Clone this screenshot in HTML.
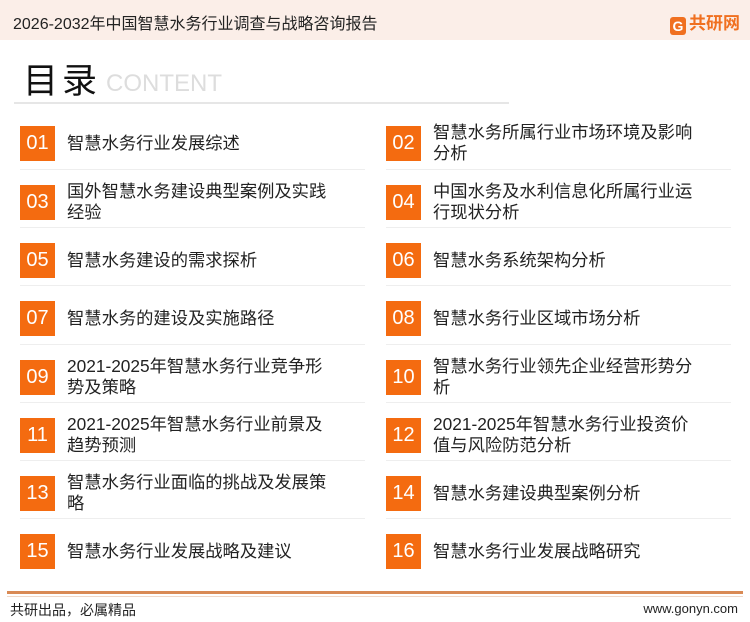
<!DOCTYPE html>
<html><head><meta charset="utf-8"><style>
body{margin:0;width:750px;height:622px;background:#fff;position:relative;overflow:hidden;font-family:"Liberation Sans","Noto Sans CJK SC",sans-serif;}
.hd{position:absolute;left:0;top:0;width:750px;height:40px;background:#fbeee8;}
.hd .t{position:absolute;left:13px;top:10px;font-size:16px;color:#222;}
.logo{position:absolute;right:10px;top:9px;font-size:17px;font-weight:bold;color:#f07020;}
.logo b{display:inline-block;width:16px;height:18px;background:#f07020;color:#fff;font-size:14px;text-align:center;line-height:18px;border-radius:3px;margin-right:3px;vertical-align:-2px}
.ml{position:absolute;left:23px;top:61px;font-size:35px;line-height:42px;color:#111;letter-spacing:4px;}
.ct{position:absolute;left:106px;top:70px;font-size:24px;color:#ddd;line-height:28px;}
.ln{position:absolute;left:14px;top:102px;width:495px;height:2px;background:#e6e6e6;}
.it{position:absolute;width:330px;height:58px;}
.it .n{position:absolute;left:0;width:35px;height:35px;background:#f46b10;color:#fff;font-size:20px;text-align:center;line-height:35px;}
.it .x{position:absolute;left:47px;font-size:17.3px;color:#222;line-height:21px;width:268px;}
.sep{position:absolute;height:1px;background:#eee;width:242px;}
.fl{position:absolute;left:7px;top:591px;width:736px;height:3px;background:#d98a55;}
.fl2{position:absolute;left:7px;top:596px;width:736px;height:1px;background:#f0d8c8;}
.ft{position:absolute;left:10px;top:600px;font-size:14px;color:#222;}
.fr{position:absolute;right:12px;top:601px;font-size:13px;color:#222;}
</style></head><body>
<div class="hd"><div class="t">2026-2032年中国智慧水务行业调查与战略咨询报告</div><div class="logo"><b>G</b>共研网</div></div>
<div class="ml">目录</div><div class="ct">CONTENT</div>
<div class="ln"></div>

<div class="it" style="left:20px;top:126px"><div class="n">01</div><div class="x" style="top:7px">智慧水务行业发展综述</div></div>
<div class="it" style="left:386px;top:126px"><div class="n">02</div><div class="x" style="top:-4px">智慧水务所属行业市场环境及影响分析</div></div>
<div class="it" style="left:20px;top:185px"><div class="n">03</div><div class="x" style="top:-4px">国外智慧水务建设典型案例及实践经验</div></div>
<div class="it" style="left:386px;top:185px"><div class="n">04</div><div class="x" style="top:-4px">中国水务及水利信息化所属行业运行现状分析</div></div>
<div class="it" style="left:20px;top:243px"><div class="n">05</div><div class="x" style="top:7px">智慧水务建设的需求探析</div></div>
<div class="it" style="left:386px;top:243px"><div class="n">06</div><div class="x" style="top:7px">智慧水务系统架构分析</div></div>
<div class="it" style="left:20px;top:301px"><div class="n">07</div><div class="x" style="top:7px">智慧水务的建设及实施路径</div></div>
<div class="it" style="left:386px;top:301px"><div class="n">08</div><div class="x" style="top:7px">智慧水务行业区域市场分析</div></div>
<div class="it" style="left:20px;top:360px"><div class="n">09</div><div class="x" style="top:-4px">2021-2025年智慧水务行业竞争形势及策略</div></div>
<div class="it" style="left:386px;top:360px"><div class="n">10</div><div class="x" style="top:-4px">智慧水务行业领先企业经营形势分析</div></div>
<div class="it" style="left:20px;top:418px"><div class="n">11</div><div class="x" style="top:-4px">2021-2025年智慧水务行业前景及趋势预测</div></div>
<div class="it" style="left:386px;top:418px"><div class="n">12</div><div class="x" style="top:-4px">2021-2025年智慧水务行业投资价值与风险防范分析</div></div>
<div class="it" style="left:20px;top:476px"><div class="n">13</div><div class="x" style="top:-4px">智慧水务行业面临的挑战及发展策略</div></div>
<div class="it" style="left:386px;top:476px"><div class="n">14</div><div class="x" style="top:7px">智慧水务建设典型案例分析</div></div>
<div class="it" style="left:20px;top:534px"><div class="n">15</div><div class="x" style="top:7px">智慧水务行业发展战略及建议</div></div>
<div class="it" style="left:386px;top:534px"><div class="n">16</div><div class="x" style="top:7px">智慧水务行业发展战略研究</div></div>

<div class="sep" style="left:386px;top:169px;width:345px"></div>
<div class="sep" style="left:20px;top:169px;width:345px"></div>
<div class="sep" style="left:386px;top:227px;width:345px"></div>
<div class="sep" style="left:20px;top:227px;width:345px"></div>
<div class="sep" style="left:386px;top:285px;width:345px"></div>
<div class="sep" style="left:20px;top:285px;width:345px"></div>
<div class="sep" style="left:386px;top:344px;width:345px"></div>
<div class="sep" style="left:20px;top:344px;width:345px"></div>
<div class="sep" style="left:386px;top:402px;width:345px"></div>
<div class="sep" style="left:20px;top:402px;width:345px"></div>
<div class="sep" style="left:386px;top:460px;width:345px"></div>
<div class="sep" style="left:20px;top:460px;width:345px"></div>
<div class="sep" style="left:386px;top:518px;width:345px"></div>
<div class="sep" style="left:20px;top:518px;width:345px"></div>

<div class="fl"></div><div class="fl2"></div>
<div class="ft">共研出品，必属精品</div>
<div class="fr">www.gonyn.com</div>
</body></html>
